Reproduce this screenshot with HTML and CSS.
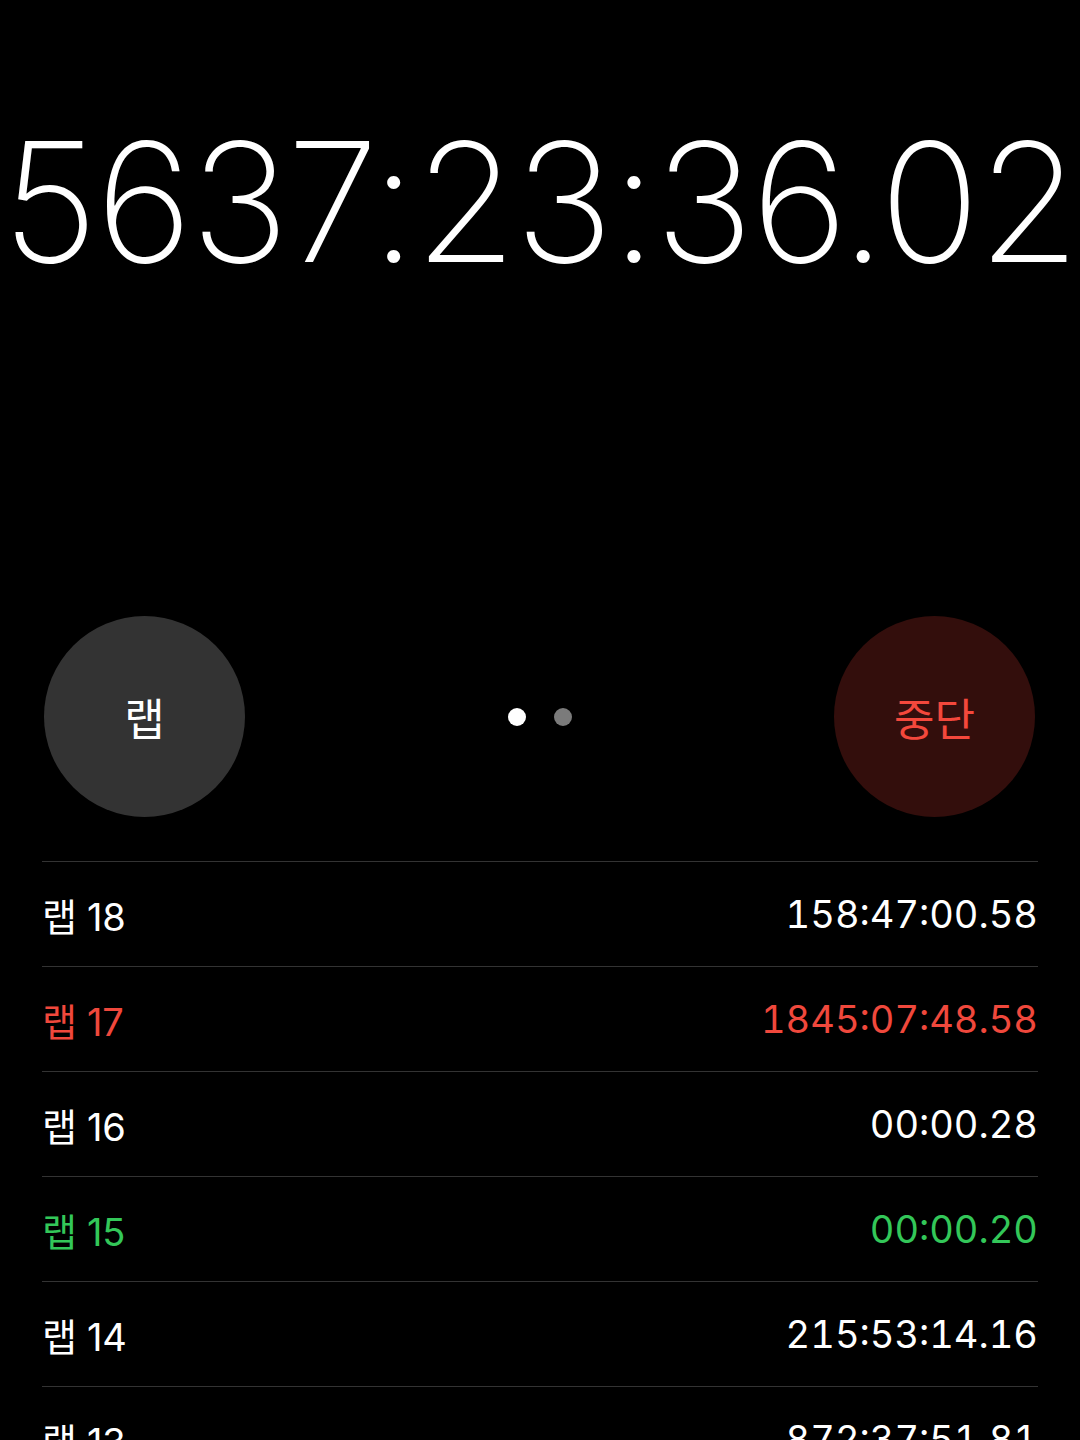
FILE: index.html
```html
<!DOCTYPE html>
<html lang="ko">

<head>
	<meta charset="UTF-8">
	<meta name="viewport" content="width=device-width, initial-scale=1.0">
	<title>스톱워치</title>
	<link rel="stylesheet" href="styles.css">
</head>

<body>
	<div class="screen">
		<div class="display">
			<div class="time">5637:23:36.02</div>
		</div>

		<div class="controls">
			<button class="round lap">랩</button>
			<div class="pager">
				<span class="dot on"></span>
				<span class="dot"></span>
			</div>
			<button class="round stop">중단</button>
		</div>

		<ul class="laps">
			<li><span>랩 18</span><span class="split">158:47:00.58</span></li>
			<li class="worst"><span>랩 17</span><span class="split">1845:07:48.58</span></li>
			<li><span>랩 16</span><span class="split">00:00.28</span></li>
			<li class="best"><span>랩 15</span><span class="split">00:00.20</span></li>
			<li><span>랩 14</span><span class="split">215:53:14.16</span></li>
			<li><span>랩 13</span><span class="split">872:37:51.81</span></li>
		</ul>
	</div>
</body>

</html>
```

FILE: styles.css
```css
body,
ul {
	margin: 0;
}

ul {
	padding: 0;
}

body {
	background: #000;
	color: #fff;
	font-family: Inter, "Noto Sans CJK KR", sans-serif;
}

.screen {
	width: 1080px;
	height: 1440px;
	overflow: hidden;
}

.display {
	height: 616px;
	padding-top: 112px;
	box-sizing: border-box;
}

.time {
	font-size: 166px;
	line-height: 180px;
	font-weight: 180;
	text-align: center;
	white-space: nowrap;
	letter-spacing: -2.2px;
}

.controls {
	display: flex;
	align-items: center;
	justify-content: space-between;
	padding: 0 45px 0 44px;
}

.round {
	width: 201px;
	height: 201px;
	border: 0;
	border-radius: 50%;
	font-family: inherit;
	font-size: 44px;
	padding: 0;
}

.lap {
	background: #333333;
	color: #fff;
}

.stop {
	background: #330e0c;
	color: #f4483c;
}

.pager {
	display: flex;
	gap: 28px;
}

.dot {
	width: 18px;
	height: 18px;
	border-radius: 50%;
	background: #7b7b7b;
}

.dot.on {
	background: #fff;
}

.laps {
	margin: 44px 42px 0;
	list-style: none;
}

.laps li {
	display: flex;
	justify-content: space-between;
	align-items: center;
	height: 104px;
	border-top: 1px solid #333;
	font-size: 38px;
	letter-spacing: -0.3px;
}

.laps .split {
	font-variant-numeric: tabular-nums;
	letter-spacing: 0;
}

.laps li.worst {
	color: #f0483c;
}

.laps li.best {
	color: #33c759;
}
```
